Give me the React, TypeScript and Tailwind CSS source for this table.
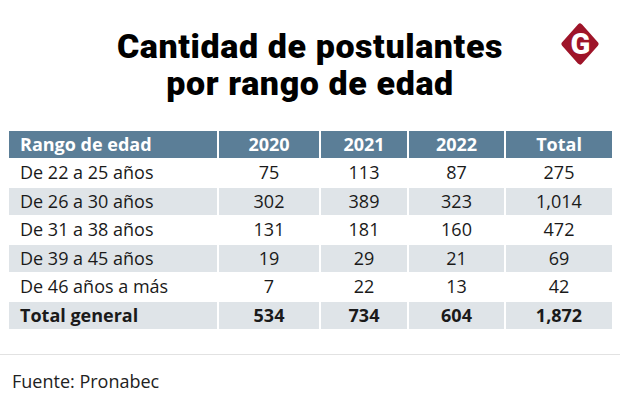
const rows = [
  { label: "De 22 a 25 años", v: ["75", "113", "87", "275"] },
  { label: "De 26 a 30 años", v: ["302", "389", "323", "1,014"] },
  { label: "De 31 a 38 años", v: ["131", "181", "160", "472"] },
  { label: "De 39 a 45 años", v: ["19", "29", "21", "69"] },
  { label: "De 46 años a más", v: ["7", "22", "13", "42"] },
];

const Logo = () => (
  <svg width="38" height="42" viewBox="0 0 38 42">
    <path
      d="M19 3 L35 21 L19 39 L3 21 Z"
      fill="#9e1429"
      stroke="#9e1429"
      strokeWidth="5"
      strokeLinejoin="round"
    />
    <text
      x="19.5"
      y="31"
      textAnchor="middle"
      fill="#fff"
      fontSize="29"
      fontWeight="900"
      fontFamily="'Roboto', sans-serif"
    >
      G
    </text>
  </svg>
);

export default function App() {
  const cell = "h-[26.5px] flex items-center justify-center";
  return (
    <div className="w-[620px] h-[406px] bg-white relative font-['Open_Sans',sans-serif] text-[#1a1a1a]">
      <div className="absolute left-[561px] top-[23px]">
        <Logo />
      </div>
      <h1 className="pt-[28px] text-center text-[34px] leading-[37px] font-black tracking-[0.6px] text-black font-['Roboto',sans-serif]">
        Cantidad de postulantes
        <br />
        por rango de edad
      </h1>

      <div className="mt-[29px] mx-[9px] grid grid-cols-[208px_100px_86px_95px_106px] gap-x-[2px] gap-y-[2px] text-[18px]">
        <div className={`${cell} !justify-start pl-[11px] bg-[#5b7e97] text-white font-bold`}>Rango de edad</div>
        {["2020", "2021", "2022", "Total"].map((h) => (
          <div key={h} className={`${cell} bg-[#5b7e97] text-white font-bold`}>
            {h}
          </div>
        ))}
        {rows.map((r, i) => {
          const bg = i % 2 === 1 ? "bg-[#dfe4e8]" : "bg-white";
          return [
            <div key={r.label} className={`${cell} !justify-start pl-[11px] ${bg}`}>
              {r.label}
            </div>,
            ...r.v.map((n, j) => (
              <div key={r.label + j} className={`${cell} ${bg}`}>
                {n}
              </div>
            )),
          ];
        })}
        <div className={`${cell} !justify-start pl-[11px] bg-[#dfe4e8] font-bold`}>Total general</div>
        {["534", "734", "604", "1,872"].map((n) => (
          <div key={n} className={`${cell} bg-[#dfe4e8] font-bold`}>
            {n}
          </div>
        ))}
      </div>

      <div className="mt-[25px] border-t border-[#e2e2e2]" />
      <p className="pl-[12px] pt-[13px] text-[18px] text-[#222]">Fuente: Pronabec</p>
    </div>
  );
}
